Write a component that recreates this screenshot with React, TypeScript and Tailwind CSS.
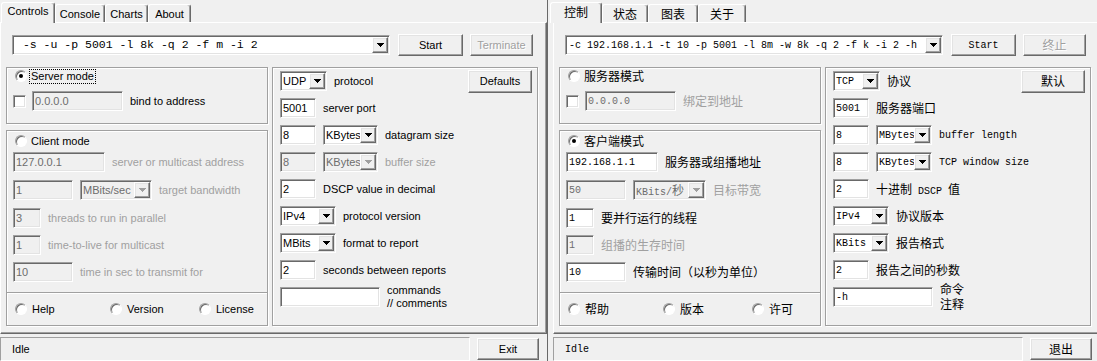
import { createContext, useContext } from 'react'

const ZhCtx = createContext(false)
const CJK = /([\u2E80-\u9FFF\u3000-\u303F\uFF00-\uFFEF]+)/

// mixed run text for the Chinese window: CJK in Noto 12px, latin in mono 10px
function Tx({ s }: { s: string }) {
  const zh = useContext(ZhCtx)
  if (!zh) return <>{s}</>
  return (
    <>
      {s.split(CJK).filter(Boolean).map((p, i) =>
        CJK.test(p) ? (
          <span key={i} className="font-['Noto_Sans_CJK_SC',sans-serif] text-[12px]">{p}</span>
        ) : (
          <span key={i} className="font-['Liberation_Mono',monospace] text-[10px]">{p}</span>
        )
      )}
    </>
  )
}

const sunken =
  'border border-t-[#a0a0a0] border-l-[#a0a0a0] border-r-white border-b-white shadow-[inset_1px_1px_0_#696969,inset_-1px_-1px_0_#e3e3e3]'
const raised =
  'border border-t-white border-l-white border-r-[#696969] border-b-[#696969] shadow-[inset_-1px_-1px_0_#a0a0a0,inset_1px_1px_0_#e3e3e3]'
const etched = 'border border-[#a0a0a0] shadow-[1px_1px_0_#fff,inset_1px_1px_0_#fff]'

interface Item {
  k: 'box' | 'combo'
  v: string
  w: string
  off?: boolean
}

interface Row {
  items: Item[]
  label: string
  label2?: string
  off?: boolean
}

interface Cfg {
  tabs: { t: string; w: string }[]
  cmd: string
  start: string
  term: string
  server: string
  client: string
  serverSel: boolean
  focus: boolean
  bind: string
  bindLabel: string
  bindOff: boolean
  clientRows: Row[]
  bottom: string[]
  defaults: string
  rightRows: Row[]
  status: string
  exit: string
}

function Arrow({ off }: { off?: boolean }) {
  return (
    <svg width="7" height="4" viewBox="0 0 7 4" shapeRendering="crispEdges">
      <polygon points="0,0 7,0 3.5,4" fill={off ? '#a0a0a0' : '#000'} />
    </svg>
  )
}

function Box({ it }: { it: Item }) {
  return (
    <div
      className={`${sunken} ${it.w} h-5 shrink-0 flex items-center pl-[2px] whitespace-pre ${
        it.off ? 'bg-[#f0f0f0] text-[#6d6d6d]' : 'bg-white text-black'
      }`}
    >
      <Tx s={it.v} />
    </div>
  )
}

function Combo({ it }: { it: Item }) {
  return (
    <div
      className={`${sunken} ${it.w} h-5 shrink-0 flex items-center ${
        it.off ? 'bg-[#f0f0f0] text-[#6d6d6d]' : 'bg-white text-black'
      }`}
    >
      <span className="flex-1 pl-[2px] overflow-hidden whitespace-pre">
        <Tx s={it.v} />
      </span>
      <div className={`${raised} bg-[#f0f0f0] w-4 h-4 mr-px shrink-0 flex items-center justify-center`}>
        <Arrow off={it.off} />
      </div>
    </div>
  )
}

function Button({ t, w, off, className = '' }: { t: string; w: string; off?: boolean; className?: string }) {
  return (
    <div
      className={`${raised} ${w} h-[22px] shrink-0 flex items-center justify-center bg-[#f0f0f0] ${
        off ? 'text-[#a0a0a0] [text-shadow:1px_1px_0_#fff]' : 'text-black'
      } ${className}`}
    >
      <Tx s={t} />
    </div>
  )
}

function Radio({ on }: { on?: boolean }) {
  return (
    <span className="w-3 h-3 shrink-0 rounded-full bg-white border border-t-[#a0a0a0] border-l-[#a0a0a0] border-r-white border-b-white shadow-[inset_1px_1px_0_#696969] flex items-center justify-center">
      {on && <span className="w-1 h-1 rounded-full bg-black" />}
    </span>
  )
}

function Check() {
  return <span className={`${sunken} w-[13px] h-[13px] shrink-0 bg-white`} />
}

function RowView({ r }: { r: Row }) {
  return (
    <div className="flex items-center h-5">
      {r.items.map((it, i) => (
        <div key={i} className={i > 0 ? 'ml-[7px]' : ''}>
          {it.k === 'box' ? <Box it={it} /> : <Combo it={it} />}
        </div>
      ))}
      <div className={`ml-[7px] whitespace-pre ${r.label2 ? 'leading-[13px]' : ''} ${r.off ? 'text-[#a0a0a0]' : 'text-black'}`}>
        <div>
          <Tx s={r.label} />
        </div>
        {r.label2 && (
          <div>
            <Tx s={r.label2} />
          </div>
        )}
      </div>
    </div>
  )
}

function Window({ c }: { c: Cfg }) {
  const zh = useContext(ZhCtx)
  const base = zh ? 'text-[10px]' : "font-['Liberation_Sans',sans-serif] text-[11px]"
  return (
    <div className={`w-[547px] h-[361px] shrink-0 flex flex-col bg-[#f0f0f0] text-black ${base}`}>
      {/* tab strip */}
      <div className={`h-[22px] flex items-end pl-px ${zh ? '-ml-[4px]' : ''}`}>
        {c.tabs.map((t, i) => (
          <div
            key={i}
            className={`${t.w} border border-b-0 border-t-white border-l-white border-r-[#696969] rounded-t-[3px] shadow-[inset_-1px_0_0_#a0a0a0] flex items-center justify-center ${
              i === 0 ? 'h-[21px] -mb-px relative z-10 bg-[#f0f0f0] pb-[3px]' : 'h-[18px] pt-px'
            }`}
          >
            <Tx s={t.t} />
          </div>
        ))}
      </div>

      {/* tab page */}
      <div className="h-[312px] border border-t-white border-l-white border-r-[#696969] border-b-[#696969] shadow-[inset_-1px_-1px_0_#a0a0a0] flex flex-col">
        <div className="flex items-center h-[22px] mt-[11px] ml-[11px]">
          <div className={`${sunken} w-[378px] h-5 bg-white flex items-center`}>
            <span
              className={`flex-1 pl-[3px] whitespace-pre overflow-hidden ${
                zh ? '' : "font-['Liberation_Mono',monospace] text-[11.5px]"
              }`}
            >
              <Tx s={c.cmd} />
            </span>
            <div className={`${raised} bg-[#f0f0f0] w-4 h-4 mr-px flex items-center justify-center`}>
              <Arrow />
            </div>
          </div>
          <Button t={c.start} w="w-[65px]" className="ml-[8px]" />
          <Button t={c.term} w="w-[63px]" className="ml-[7px]" off />
        </div>

        <div className="flex mt-[11px] ml-[5px]">
          {/* left column */}
          <div className="w-[262px] flex flex-col">
            <div className={`${etched} h-[57px] flex flex-col pl-[6px]`}>
              <div className="flex items-center h-[14px] mt-px ml-[2px]">
                <Radio on={c.serverSel} />
                <span
                  className={`ml-[3px] px-px leading-[13px] ${c.focus ? 'outline outline-1 outline-dotted outline-black' : ''}`}
                >
                  <Tx s={c.server} />
                </span>
              </div>
              <div className="flex items-center h-5 mt-[8px]">
                <Check />
                <div className="ml-[6px]">
                  <Box it={{ k: 'box', v: c.bind, w: 'w-[91px]', off: true }} />
                </div>
                <span className={`ml-[7px] ${c.bindOff ? 'text-[#a0a0a0]' : ''}`}>
                  <Tx s={c.bindLabel} />
                </span>
              </div>
            </div>

            <div className={`${etched} h-[163px] mt-[6px] flex flex-col pl-[6px]`}>
              <div className="flex items-center h-[14px] mt-[3px] ml-[2px]">
                <Radio on={!c.serverSel} />
                <span className="ml-[4px]">
                  <Tx s={c.client} />
                </span>
              </div>
              <div className="mt-[4px]">
                <RowView r={c.clientRows[0]} />
              </div>
              <div className="mt-[8px]">
                <RowView r={c.clientRows[1]} />
              </div>
              <div className="mt-[8px]">
                <RowView r={c.clientRows[2]} />
              </div>
              <div className="mt-[7px]">
                <RowView r={c.clientRows[3]} />
              </div>
              <div className="mt-[7px]">
                <RowView r={c.clientRows[4]} />
              </div>
            </div>

            <div className={`${etched} h-[34px] -mt-px flex items-center pl-[8px]`}>
              <div className="w-[95px] flex items-center">
                <Radio />
                <span className="ml-[5px]">
                  <Tx s={c.bottom[0]} />
                </span>
              </div>
              <div className="w-[89px] flex items-center">
                <Radio />
                <span className="ml-[5px]">
                  <Tx s={c.bottom[1]} />
                </span>
              </div>
              <div className="flex items-center">
                <Radio />
                <span className="ml-[5px]">
                  <Tx s={c.bottom[2]} />
                </span>
              </div>
            </div>
          </div>

          {/* right group */}
          <div className={`${etched} ml-[4px] w-[266px] h-[259px] flex flex-col pl-[7px] pr-[5px] pt-[3px] gap-[7px]`}>
            <div className="flex items-center justify-between h-5">
              <RowView r={c.rightRows[0]} />
              <Button t={c.defaults} w="w-[64px]" className="h-[23px]" />
            </div>
            {c.rightRows.slice(1).map((r, i) => (
              <RowView key={i} r={r} />
            ))}
          </div>
        </div>
      </div>

      {/* status line */}
      <div className="flex mt-[3px] h-[24px]">
        <div className="w-[470px] h-full border border-t-[#a0a0a0] border-l-[#a0a0a0] border-r-white border-b-white flex items-center pl-[11px]">
          <Tx s={c.status} />
        </div>
        <Button t={c.exit} w="w-[62px]" className="ml-[7px] mt-[1px]" />
      </div>
    </div>
  )
}

const EN: Cfg = {
  tabs: [
    { t: 'Controls', w: 'w-[54px]' },
    { t: 'Console', w: 'w-[50px]' },
    { t: 'Charts', w: 'w-[43px]' },
    { t: 'About', w: 'w-[43px]' },
  ],
  cmd: ' -s -u -p 5001 -l 8k -q 2 -f m -i 2',
  start: 'Start',
  term: 'Terminate',
  server: 'Server mode',
  client: 'Client mode',
  serverSel: true,
  focus: true,
  bind: '0.0.0.0',
  bindLabel: 'bind to address',
  bindOff: false,
  clientRows: [
    { items: [{ k: 'box', v: '127.0.0.1', w: 'w-[92px]', off: true }], label: 'server or multicast address', off: true },
    {
      items: [
        { k: 'box', v: '1', w: 'w-[60px]', off: true },
        { k: 'combo', v: 'MBits/sec', w: 'w-[72px]', off: true },
      ],
      label: 'target bandwidth',
      off: true,
    },
    { items: [{ k: 'box', v: '3', w: 'w-[28px]', off: true }], label: 'threads to run in parallel', off: true },
    { items: [{ k: 'box', v: '1', w: 'w-[28px]', off: true }], label: 'time-to-live for multicast', off: true },
    { items: [{ k: 'box', v: '10', w: 'w-[60px]', off: true }], label: 'time in sec to transmit for', off: true },
  ],
  bottom: ['Help', 'Version', 'License'],
  defaults: 'Defaults',
  rightRows: [
    { items: [{ k: 'combo', v: 'UDP', w: 'w-[47px]' }], label: 'protocol' },
    { items: [{ k: 'box', v: '5001', w: 'w-[36px]' }], label: 'server port' },
    {
      items: [
        { k: 'box', v: '8', w: 'w-[36px]' },
        { k: 'combo', v: 'KBytes', w: 'w-[55px]' },
      ],
      label: 'datagram size',
    },
    {
      items: [
        { k: 'box', v: '8', w: 'w-[36px]', off: true },
        { k: 'combo', v: 'KBytes', w: 'w-[55px]', off: true },
      ],
      label: 'buffer size',
      off: true,
    },
    { items: [{ k: 'box', v: '2', w: 'w-[36px]' }], label: 'DSCP value in decimal' },
    { items: [{ k: 'combo', v: 'IPv4', w: 'w-[56px]' }], label: 'protocol version' },
    { items: [{ k: 'combo', v: 'MBits', w: 'w-[56px]' }], label: 'format to report' },
    { items: [{ k: 'box', v: '2', w: 'w-[36px]' }], label: 'seconds between reports' },
    { items: [{ k: 'box', v: '', w: 'w-[100px]' }], label: 'commands', label2: '// comments' },
  ],
  status: 'Idle',
  exit: 'Exit',
}

const ZH: Cfg = {
  tabs: [
    { t: '控制', w: 'w-[52px]' },
    { t: '状态', w: 'w-[46px]' },
    { t: '图表', w: 'w-[50px]' },
    { t: '关于', w: 'w-[48px]' },
  ],
  cmd: '-c 192.168.1.1 -t 10 -p 5001 -l 8m -w 8k -q 2 -f k -i 2 -h',
  start: 'Start',
  term: '终止',
  server: '服务器模式',
  client: '客户端模式',
  serverSel: false,
  focus: false,
  bind: '0.0.0.0',
  bindLabel: '绑定到地址',
  bindOff: true,
  clientRows: [
    { items: [{ k: 'box', v: '192.168.1.1', w: 'w-[92px]' }], label: '服务器或组播地址' },
    {
      items: [
        { k: 'box', v: '50', w: 'w-[60px]', off: true },
        { k: 'combo', v: 'KBits/秒', w: 'w-[73px]', off: true },
      ],
      label: '目标带宽',
      off: true,
    },
    { items: [{ k: 'box', v: '1', w: 'w-[28px]' }], label: '要并行运行的线程' },
    { items: [{ k: 'box', v: '1', w: 'w-[28px]', off: true }], label: '组播的生存时间', off: true },
    { items: [{ k: 'box', v: '10', w: 'w-[60px]' }], label: '传输时间（以秒为单位）' },
  ],
  bottom: ['帮助', '版本', '许可'],
  defaults: '默认',
  rightRows: [
    { items: [{ k: 'combo', v: 'TCP', w: 'w-[47px]' }], label: '协议' },
    { items: [{ k: 'box', v: '5001', w: 'w-[36px]' }], label: '服务器端口' },
    {
      items: [
        { k: 'box', v: '8', w: 'w-[36px]' },
        { k: 'combo', v: 'MBytes', w: 'w-[56px]' },
      ],
      label: 'buffer length',
    },
    {
      items: [
        { k: 'box', v: '8', w: 'w-[36px]' },
        { k: 'combo', v: 'KBytes', w: 'w-[56px]' },
      ],
      label: 'TCP window size',
    },
    { items: [{ k: 'box', v: '2', w: 'w-[36px]' }], label: '十进制 DSCP 值' },
    { items: [{ k: 'combo', v: 'IPv4', w: 'w-[56px]' }], label: '协议版本' },
    { items: [{ k: 'combo', v: 'KBits', w: 'w-[56px]' }], label: '报告格式' },
    { items: [{ k: 'box', v: '2', w: 'w-[36px]' }], label: '报告之间的秒数' },
    { items: [{ k: 'box', v: '-h', w: 'w-[100px]' }], label: '命令', label2: '注释' },
  ],
  status: 'Idle',
  exit: '退出',
}

export default function App() {
  return (
    <div className="w-[1097px] h-[361px] overflow-hidden flex bg-[#f0f0f0]">
      <Window c={EN} />
      <div className="w-[6px] h-full shrink-0 border-l border-[#696969]" />
      <ZhCtx.Provider value={true}>
        <Window c={ZH} />
      </ZhCtx.Provider>
    </div>
  )
}
